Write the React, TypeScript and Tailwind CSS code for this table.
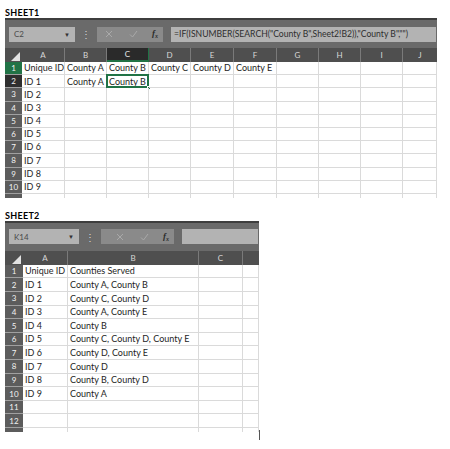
import React from 'react';

interface Col {
    label: string;
    w: string;
}

interface SheetProps {
    title: string;
    cellRef: string;
    formula: string;
    cols: Col[];
    rows: string[][];
    rowH: string;
    nameW: string;
    fxW: string;
    selected?: { row: number; col: number };
    frameW: string;
}

const font = { fontFamily: 'Lato, "Open Sans", sans-serif' };

const sheet1Cols: Col[] = [
    { label: '', w: 'w-[17px]' },
    { label: 'A', w: 'w-[43px]' },
    { label: 'B', w: 'w-[42px]' },
    { label: 'C', w: 'w-[42px]' },
    { label: 'D', w: 'w-[42px]' },
    { label: 'E', w: 'w-[43px]' },
    { label: 'F', w: 'w-[43px]' },
    { label: 'G', w: 'w-[42px]' },
    { label: 'H', w: 'w-[42px]' },
    { label: 'I', w: 'w-[42px]' },
    { label: 'J', w: 'w-[34px]' },
];

const sheet1Rows: string[][] = [
    ['Unique ID', 'County A', 'County B', 'County C', 'County D', 'County E'],
    ['ID 1', 'County A', 'County B'],
    ['ID 2'],
    ['ID 3'],
    ['ID 4'],
    ['ID 5'],
    ['ID 6'],
    ['ID 7'],
    ['ID 8'],
    ['ID 9'],
];

const sheet2Cols: Col[] = [
    { label: '', w: 'w-[18px]' },
    { label: 'A', w: 'w-[45px]' },
    { label: 'B', w: 'w-[131px]' },
    { label: 'C', w: 'w-[44px]' },
    { label: '', w: 'w-[16px]' },
];

const sheet2Rows: string[][] = [
    ['Unique ID', 'Counties Served'],
    ['ID 1', 'County A, County B'],
    ['ID 2', 'County C, County D'],
    ['ID 3', 'County A, County E'],
    ['ID 4', 'County B'],
    ['ID 5', 'County C, County D, County E'],
    ['ID 6', 'County D, County E'],
    ['ID 7', 'County D'],
    ['ID 8', 'County B, County D'],
    ['ID 9', 'County A'],
    [],
    [],
];

const Sheet: React.FC<SheetProps> = ({ title, cellRef, formula, cols, rows, rowH, nameW, fxW, selected, frameW }) => {
    return (
        <div className="flex flex-col">
            <div className="h-[10px] text-[9px] leading-[10px] font-bold text-black tracking-[0.3px]" style={font}>
                {title}
            </div>
            <div className={`${frameW} flex flex-col`}>
                <div className="h-[2px] bg-[#3e3e3e]" />
                {/* name box + formula bar */}
                <div className="h-[28px] bg-[#6a6a6a] flex items-center pl-[4px] pr-px">
                    <div className={`${nameW} h-[15px] bg-[#b3b3b3] flex items-center justify-between px-[5px] text-[8px] text-[#4a4a4a]`} style={font}>
                        <span>{cellRef}</span>
                        <span className="text-[6px] text-[#333]">▼</span>
                    </div>
                    <div className="w-[22px] flex justify-center text-[10px] text-[#d6d6d6] leading-none" style={font}>⋮</div>
                    <div className={`${fxW} h-[15px] bg-[#8a8a8a] flex items-center justify-end pr-[5px] gap-[10px]`}>
                        <svg width="8" height="8" viewBox="0 0 8 8" className="mr-[6px]">
                            <path d="M1 1L7 7M7 1L1 7" stroke="#a9a9a9" strokeWidth="1" />
                        </svg>
                        <svg width="9" height="8" viewBox="0 0 9 8" className="mr-[4px]">
                            <path d="M1 4.5L3.5 7L8 1" stroke="#a9a9a9" strokeWidth="1" fill="none" />
                        </svg>
                        <span className="text-[9px] italic font-bold text-[#2b2b2b]" style={{ fontFamily: '"Liberation Serif", serif' }}>
                            f<sub className="text-[6px]">x</sub>
                        </span>
                    </div>
                    <div className="flex-1 h-[15px] bg-[#b3b3b3] ml-[8px] flex items-center pl-[3px] text-[8.6px] text-[#2e2e2e] whitespace-nowrap overflow-hidden" style={font}>
                        {formula}
                    </div>
                </div>
                {/* column headers */}
                <div className="h-[14px] flex bg-[#4f4f4f]">
                    {cols.map((c, i) => {
                        const isSel = selected && selected.col === i;
                        return (
                            <div
                                key={i}
                                className={`${c.w} relative flex items-center justify-center text-[8px] ${isSel ? 'bg-[#2a2a2a] border-b-2 border-[#217346] text-[#e8e8e8]' : 'text-[#d8d8d8]'} ${i > 0 && i < cols.length - 1 ? 'border-r border-[#7a7a7a]' : ''}`}
                                style={font}
                            >
                                {i === 0 ? (
                                    <svg width="9" height="9" viewBox="0 0 9 9" className="absolute right-[2px] bottom-[1px]">
                                        <path d="M9 0L9 9L0 9Z" fill="#e2e2e2" />
                                    </svg>
                                ) : (
                                    c.label
                                )}
                            </div>
                        );
                    })}
                </div>
                {/* rows */}
                {rows.map((r, ri) => (
                    <div key={ri} className={`${rowH} flex bg-white`}>
                        {cols.map((c, ci) => {
                            if (ci === 0) {
                                const green = selected && ri === 0;
                                const dark = selected && ri === selected.row;
                                return (
                                    <div
                                        key={ci}
                                        className={`${c.w} flex items-center justify-center text-[8px] text-[#f2f2f2] border-b border-[#a0a0a0] ${green ? 'bg-[#217346]' : dark ? 'bg-[#2f2f2f]' : 'bg-[#5c5c5c]'}`}
                                        style={font}
                                    >
                                        {ri + 1}
                                    </div>
                                );
                            }
                            const isSel = selected && selected.row === ri && selected.col === ci;
                            return (
                                <div
                                    key={ci}
                                    className={`${c.w} relative flex items-center pl-[2px] text-[9px] text-[#1e1e1e] whitespace-nowrap border-b border-r border-[#dadada]`}
                                    style={font}
                                >
                                    {r[ci - 1] ?? ''}
                                    {isSel && (
                                        <>
                                            <div className="absolute -left-px -top-px right-[-1px] bottom-[-1px] border-2 border-[#217346]" />
                                            <div className="absolute right-[-3px] bottom-[-3px] w-[4px] h-[4px] bg-[#217346] border border-white" />
                                        </>
                                    )}
                                </div>
                            );
                        })}
                    </div>
                ))}
                {/* partial row at bottom */}
                <div className="h-[4px] flex">
                    {cols.map((c, ci) => (
                        <div key={ci} className={`${c.w} ${ci === 0 ? 'bg-[#5c5c5c]' : 'border-r border-[#dadada]'}`} />
                    ))}
                </div>
            </div>
        </div>
    );
};

export default function App() {
    return (
        <div className="w-[450px] h-[449px] bg-white pl-[5px] pt-[8px] overflow-hidden relative">
            <Sheet
                title="SHEET1"
                cellRef="C2"
                formula={'=IF(ISNUMBER(SEARCH("County B",Sheet2!B2)),"County B","")'}
                cols={sheet1Cols}
                rows={sheet1Rows}
                rowH="h-[13.2px]"
                nameW="w-[66px]"
                fxW="w-[66px]"
                selected={{ row: 1, col: 3 }}
                frameW="w-[432px]"
            />
            <div className="h-[13px]" />
            <Sheet
                title="SHEET2"
                cellRef="K14"
                formula=""
                cols={sheet2Cols}
                rows={sheet2Rows}
                rowH="h-[13.6px]"
                nameW="w-[70px]"
                fxW="w-[73px]"
                frameW="w-[254px]"
            />
            {/* small scroll mark at the right of sheet2 */}
            <div className="absolute left-[259px] top-[430px] w-px h-[10px] bg-[#555]" />
        </div>
    );
}
